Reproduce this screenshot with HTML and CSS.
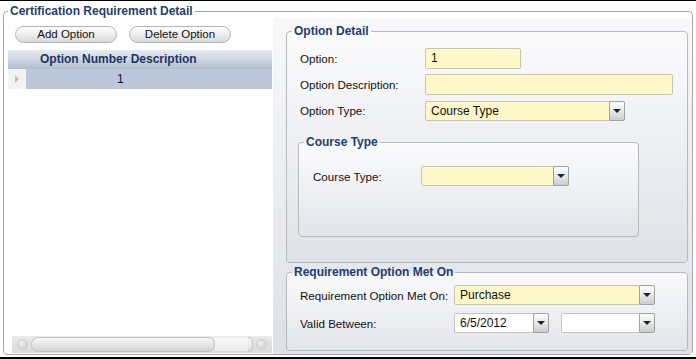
FILE: index.html
```html
<!DOCTYPE html>
<html lang="en">
<head>
  <meta charset="UTF-8">
  <title>Certification Requirement Detail</title>
  <link rel="stylesheet" href="styles.css">
</head>
<body>
  <div class="screen">
    <fieldset class="group outer">
      <legend>Certification Requirement Detail</legend>
      <div class="split">
        <!-- option list -->
        <div class="list-panel">
          <div class="toolbar">
            <button class="pill">Add Option</button>
            <button class="pill">Delete Option</button>
          </div>
          <div class="grid-head">Option Number Description</div>
          <div class="grid-row">
            <span class="indicator"><span class="row-arrow"></span></span>
            <span class="cell-num">1</span>
          </div>
          <div class="grid-fill"></div>
          <div class="hscroll">
            <span class="sb-btn"></span>
            <span class="sb-thumb"></span>
            <span class="sb-track"></span>
            <span class="sb-end"></span>
            <span class="sb-btn"></span>
          </div>
        </div>

        <!-- detail side -->
        <div class="detail-panel">
          <fieldset class="group option-detail">
            <legend>Option Detail</legend>
            <div class="rows">
              <div class="form-row">
                <span class="label w125">Option:</span>
                <span class="field short">1</span>
              </div>
              <div class="form-row">
                <span class="label w125">Option Description:</span>
                <span class="field long"></span>
              </div>
              <div class="form-row">
                <span class="label w125">Option Type:</span>
                <span class="combo type-combo"><span class="combo-text">Course Type</span><span class="combo-btn"><i></i></span></span>
              </div>
            </div>
            <fieldset class="group course-type">
              <legend>Course Type</legend>
              <div class="form-row">
                <span class="label w108">Course Type:</span>
                <span class="combo course-combo"><span class="combo-text"></span><span class="combo-btn"><i></i></span></span>
              </div>
            </fieldset>
          </fieldset>

          <fieldset class="group met-on">
            <legend>Requirement Option Met On</legend>
            <div class="rows wide-gap">
              <div class="form-row">
                <span class="label w154">Requirement Option Met On:</span>
                <span class="combo met-combo"><span class="combo-text">Purchase</span><span class="combo-btn"><i></i></span></span>
              </div>
              <div class="form-row">
                <span class="label w154">Valid Between:</span>
                <span class="combo date-combo white"><span class="combo-text">6/5/2012</span><span class="combo-btn"><i></i></span></span>
                <span class="combo date-combo white second"><span class="combo-text"></span><span class="combo-btn"><i></i></span></span>
              </div>
            </div>
          </fieldset>
        </div>
      </div>
    </fieldset>
  </div>
</body>
</html>
```

FILE: styles.css
```css
body {
  margin: 0;
  font-family: 'Liberation Sans', Arial, sans-serif;
  font-size: 11.5px;
  color: #111;
  background: #ffffff;
}
.screen {
  width: 696px;
  height: 359px;
  box-sizing: border-box;
  border-top: 1px solid #000;
  border-bottom: 2px solid #000;
  display: flex;
  flex-direction: column;
  background: #ffffff;
}
.group {
  margin: 0;
  padding: 0;
  min-width: 0;
  border: 1px solid #b9b9b9;
  border-radius: 4px;
  display: flex;
  flex-direction: column;
}
.group > legend {
  margin-left: 5px;
  padding: 0 2px;
  font-weight: bold;
  font-size: 12px;
  line-height: 14px;
  color: #1f3d72;
}
.outer {
  flex: 1;
  margin: 3px 3px 2px 3px;
  border-color: #a9a9a9;
}
.outer > legend {
  margin-left: 4px;
}
.split {
  flex: 1;
  display: flex;
}

/* left list */
.list-panel {
  width: 264px;
  margin-left: 4px;
  display: flex;
  flex-direction: column;
  background: #ffffff;
}
.toolbar {
  height: 32px;
  box-sizing: border-box;
  padding: 8px 0 0 7px;
  display: flex;
  gap: 12px;
}
.pill {
  width: 102px;
  height: 17px;
  padding: 0;
  border: 1px solid #b3b3b3;
  border-radius: 9px;
  background: linear-gradient(#fefefe, #e9e9e9 60%, #d9d9d9);
  font-family: inherit;
  font-size: 11.5px;
  line-height: 15px;
  color: #111;
}
.grid-head {
  height: 19px;
  box-sizing: border-box;
  padding-left: 32px;
  line-height: 19px;
  font-weight: bold;
  font-size: 12px;
  color: #1b3562;
  background: linear-gradient(#e6ebf2, #cbd4e0 55%, #b1bed0);
}
.grid-row {
  height: 20px;
  display: flex;
}
.indicator {
  width: 18px;
  background: #f3f3f3;
  display: flex;
  align-items: center;
  padding-left: 7px;
  box-sizing: border-box;
}
.row-arrow {
  width: 0;
  height: 0;
  border-top: 4px solid transparent;
  border-bottom: 4px solid transparent;
  border-left: 4px solid #bdbdbd;
}
.cell-num {
  flex: 1;
  background: #bcc8da;
  line-height: 20px;
  padding-left: 91px;
  font-size: 12px;
}
.grid-fill {
  flex: 1;
}
.hscroll {
  height: 17px;
  margin: 0 0 1px 4px;
  display: flex;
  align-items: center;
  background: linear-gradient(#ececec, #e4e4e4 30%, #dcdcdc);
  padding: 0 5px;
}
.sb-btn {
  width: 9px;
  height: 9px;
  border-radius: 50%;
  background: radial-gradient(circle at 40% 35%, #f2f2f2, #c4c4c4);
  border: 1px solid #cfcfcf;
}
.sb-thumb {
  width: 182px;
  height: 13px;
  margin-left: 3px;
  border: 1px solid #c4c4c4;
  border-radius: 7px;
  background: linear-gradient(#f7f7f7, #e6e6e6 50%, #d4d4d4);
}
.sb-track {
  flex: 1;
  height: 13px;
  background: linear-gradient(#fbfbfb, #ececec);
}
.sb-end {
  width: 4px;
  height: 13px;
  border: 1px solid #c4c4c4;
  border-left: none;
  border-radius: 0 7px 7px 0;
  margin-right: 3px;
  background: linear-gradient(#f7f7f7, #dedede);
}

/* right detail */
.detail-panel {
  flex: 1;
  margin-left: 1px;
  padding: 6px 4px 3px 13px;
  background: linear-gradient(#f8f8fa, #dde1e8);
}
.option-detail {
  padding: 10px 0 25px 13px;
  background: linear-gradient(#fbfbfc, #dfe2e9);
}
.option-detail > legend,
.met-on > legend {
  margin-left: -8px;
}
.rows {
  display: flex;
  flex-direction: column;
  gap: 5px;
}
.rows.wide-gap {
  gap: 8px;
}
.form-row {
  display: flex;
  align-items: center;
  height: 21px;
}
.label {
  flex: none;
  font-size: 11.6px;
}
.w125 { width: 125px; }
.w108 { width: 108px; }
.w154 { width: 154px; }
.field {
  height: 21px;
  box-sizing: border-box;
  border: 1px solid #c9c5b0;
  border-radius: 2px;
  background: #fef8c9;
  padding-left: 5px;
  line-height: 19px;
  font-size: 12px;
}
.field.short { width: 96px; }
.field.long { width: 248px; }
.combo {
  height: 20px;
  box-sizing: border-box;
  display: flex;
  border: 1px solid #c9c5b0;
  border-radius: 2px;
  background: #fef8c9;
}
.combo.white {
  background: #ffffff;
  border-color: #c4c4c4;
}
.combo-text {
  flex: 1;
  padding-left: 5px;
  line-height: 18px;
  font-size: 12px;
}
.combo-btn {
  width: 16px;
  margin: -1px -1px -1px 0;
  box-sizing: border-box;
  border: 1px solid #a2a2a2;
  border-radius: 2px;
  background: linear-gradient(#fdfdfd, #e8e8e8 50%, #cdcdcd);
  display: flex;
  align-items: center;
  justify-content: center;
}
.combo-btn i {
  width: 0;
  height: 0;
  border-left: 4px solid transparent;
  border-right: 4px solid transparent;
  border-top: 4px solid #18243a;
}
.type-combo { width: 200px; }
.course-type {
  width: 341px;
  box-sizing: border-box;
  margin: 14px 0 0 -2px;
  padding: 17px 0 50px 14px;
  background: linear-gradient(#fcfcfd, #e1e4ea);
}
.course-type > legend {
  margin-left: -9px;
}
.course-type .form-row { height: 20px; }
.course-combo { width: 148px; }
.met-on {
  margin-top: 2px;
  padding: 6px 0 17px 13px;
  background: linear-gradient(#fafafb, #e2e5eb);
}
.met-on .form-row { height: 20px; }
.met-combo { width: 201px; }
.date-combo { width: 95px; }
.date-combo.second {
  margin-left: 12px;
  width: 94px;
}
```
